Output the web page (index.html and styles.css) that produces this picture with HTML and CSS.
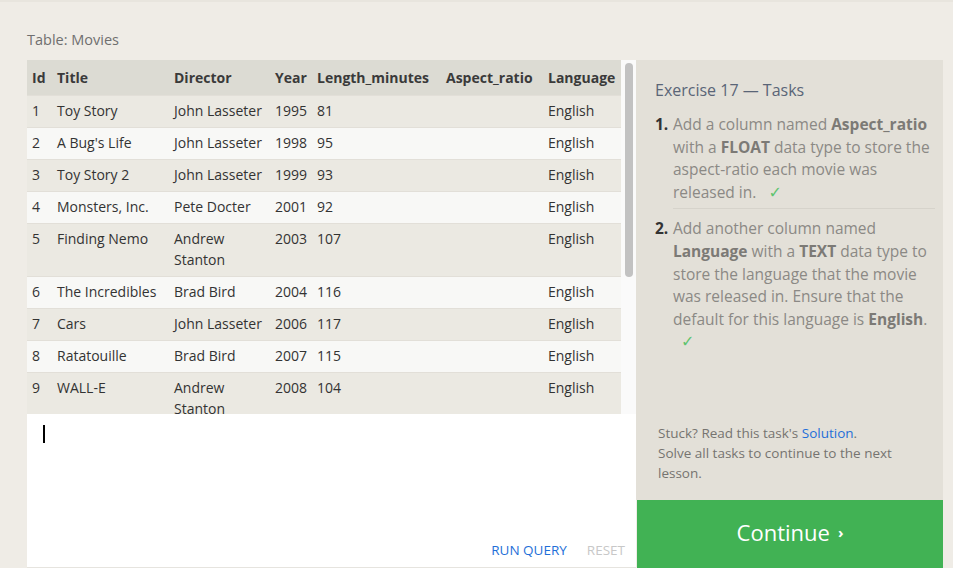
FILE: index.html
```html
<!DOCTYPE html>
<html>
<head>
<meta charset="utf-8">
<link rel="stylesheet" href="styles.css">
</head>
<body>
<div class="page">
  <div class="caption">Table: Movies</div>
  <div class="frame">
    <div class="left">
      <div class="results">
        <div class="table-area">
          <table class="movies">
            <colgroup>
              <col class="c-id"><col class="c-title"><col class="c-dir"><col class="c-year"><col class="c-len"><col class="c-asp"><col class="c-lang">
            </colgroup>
            <thead>
              <tr><th>Id</th><th>Title</th><th>Director</th><th>Year</th><th>Length_minutes</th><th>Aspect_ratio</th><th>Language</th></tr>
            </thead>
            <tbody>
              <tr><td>1</td><td>Toy Story</td><td>John Lasseter</td><td>1995</td><td>81</td><td></td><td>English</td></tr>
              <tr><td>2</td><td>A Bug's Life</td><td>John Lasseter</td><td>1998</td><td>95</td><td></td><td>English</td></tr>
              <tr><td>3</td><td>Toy Story 2</td><td>John Lasseter</td><td>1999</td><td>93</td><td></td><td>English</td></tr>
              <tr><td>4</td><td>Monsters, Inc.</td><td>Pete Docter</td><td>2001</td><td>92</td><td></td><td>English</td></tr>
              <tr><td>5</td><td>Finding Nemo</td><td>Andrew Stanton</td><td>2003</td><td>107</td><td></td><td>English</td></tr>
              <tr><td>6</td><td>The Incredibles</td><td>Brad Bird</td><td>2004</td><td>116</td><td></td><td>English</td></tr>
              <tr><td>7</td><td>Cars</td><td>John Lasseter</td><td>2006</td><td>117</td><td></td><td>English</td></tr>
              <tr><td>8</td><td>Ratatouille</td><td>Brad Bird</td><td>2007</td><td>115</td><td></td><td>English</td></tr>
              <tr><td>9</td><td>WALL-E</td><td>Andrew Stanton</td><td>2008</td><td>104</td><td></td><td>English</td></tr>
            </tbody>
          </table>
        </div>
        <div class="scroll-gutter"><div class="scroll-thumb"></div></div>
      </div>
      <div class="editor">
        <div class="editor-input"><span class="cursor"></span></div>
        <div class="editor-actions">
          <span class="run">RUN QUERY</span>
          <span class="reset">RESET</span>
        </div>
      </div>
    </div>
    <div class="right">
      <div class="tasks">
        <h2 class="tasks-title">Exercise 17 — Tasks</h2>
        <ol class="task-list">
          <li class="task">
            <span class="task-num">1.</span>
            <span class="task-text">Add a column named <b>Aspect_ratio</b> with a <b>FLOAT</b> data type to store the aspect-ratio each movie was released in. <span class="check">✓</span></span>
          </li>
          <li class="task">
            <span class="task-num">2.</span>
            <span class="task-text">Add another column named <b>Language</b> with a <b>TEXT</b> data type to store the language that the movie was released in. Ensure that the default for this language is <b>English</b>. <span class="check">✓</span></span>
          </li>
        </ol>
        <div class="stuck">
          Stuck? Read this task's <span class="link">Solution</span>.<br>
          Solve all tasks to continue to the next lesson.
        </div>
      </div>
      <div class="continue">Continue <span class="chev">›</span></div>
    </div>
  </div>
</div>
</body>
</html>
```

FILE: styles.css
```css
html, body {
  margin: 0;
  padding: 0;
}
body {
  background: #efece6;
  font-family: "Open Sans", "DejaVu Sans", sans-serif;
  font-size: 14px;
  color: #333;
  border-top: 2px solid #e8e5de;
}
.page {
  padding: 0 10px 0 27px;
}
.caption {
  height: 58px;
  line-height: 20px;
  padding-top: 28px;
  box-sizing: border-box;
  font-size: 14.5px;
  color: #6f6f6f;
}
.frame {
  display: flex;
  width: 916px;
}
.left {
  width: 609px;
  display: flex;
  flex-direction: column;
}
.results {
  height: 354px;
  display: flex;
  overflow: hidden;
}
.table-area {
  width: 594px;
  background: #ebe9e2;
}
.movies {
  border-collapse: collapse;
  table-layout: fixed;
  width: 594px;
}
.c-id { width: 25px; }
.c-title { width: 117px; }
.c-dir { width: 101px; }
.c-year { width: 42px; }
.c-len { width: 129px; }
.c-asp { width: 102px; }
.c-lang { width: 78px; }
.movies th {
  background: #dcdbd3;
  text-align: left;
  font-weight: 700;
  height: 35px;
  padding: 0 0 0 5px;
  color: #3a3a3a;
  white-space: nowrap;
  overflow: visible;
}
.movies td {
  padding: 4px 4px 6px 5px;
  line-height: 21px;
  vertical-align: top;
  color: #333;
}
.movies tbody tr {
  border-top: 1px solid #e2dfd8;
}
.movies tbody tr:nth-child(odd) {
  background: #ebe9e2;
}
.movies tbody tr:nth-child(even) {
  background: #f8f8f6;
}
.scroll-gutter {
  width: 15px;
  background: #fafafa;
  padding: 3px 3px 0 4px;
  box-sizing: border-box;
}
.scroll-thumb {
  width: 8px;
  height: 214px;
  border-radius: 4px;
  background: #c2c2c2;
}
.editor {
  height: 153px;
  background: #fff;
  border-bottom: 1px solid #e6e4df;
  display: flex;
  flex-direction: column;
}
.editor-input {
  flex: 1;
  padding: 11px 0 0 16px;
}
.cursor {
  display: block;
  width: 2px;
  height: 18px;
  background: #000;
}
.editor-actions {
  display: flex;
  justify-content: flex-end;
  gap: 20px;
  padding: 0 11px 8px 0;
  font-size: 13.5px;
  line-height: 18px;
}
.run { color: #1f6fd8; }
.reset { color: #c8c8c8; }
.right {
  width: 307px;
  display: flex;
  flex-direction: column;
}
.tasks {
  flex: 1;
  background: #e3e0d8;
  padding: 20px 8px 17px 19px;
  display: flex;
  flex-direction: column;
}
.tasks-title {
  margin: 0;
  font-size: 16px;
  font-weight: 400;
  line-height: 20px;
  color: #5a6577;
}
.task-list {
  list-style: none;
  margin: 13px 0 0 0;
  padding: 0;
}
.task {
  display: flex;
  font-size: 15.5px;
  line-height: 22.6px;
  color: #8b8985;
}
.task + .task {
  margin-top: 5px;
  padding-top: 3px;
}
.task:first-child .task-text {
  border-bottom: 1px solid #d6d3cb;
  padding-bottom: 5px;
}
.task-num {
  width: 18px;
  flex: none;
  font-weight: 700;
  color: #333;
}
.task-text b {
  font-weight: 700;
  color: #7c7a76;
}
.check {
  display: inline-block;
  margin-left: 8px;
  color: #5fc46f;
  font-size: 16px;
  line-height: 20px;
}
.stuck {
  margin-top: auto;
  width: 250px;
  padding-left: 3px;
  font-size: 13.5px;
  line-height: 20px;
  color: #767470;
}
.link { color: #1f6fd8; }
.continue {
  height: 68px;
  box-sizing: border-box;
  padding-bottom: 4px;
  background: #41b254;
  color: #fff;
  font-size: 22px;
  display: flex;
  align-items: center;
  justify-content: center;
  gap: 8px;
  margin-left: 1px;
}
.chev {
  font-size: 15px;
  font-weight: 700;
}
```
